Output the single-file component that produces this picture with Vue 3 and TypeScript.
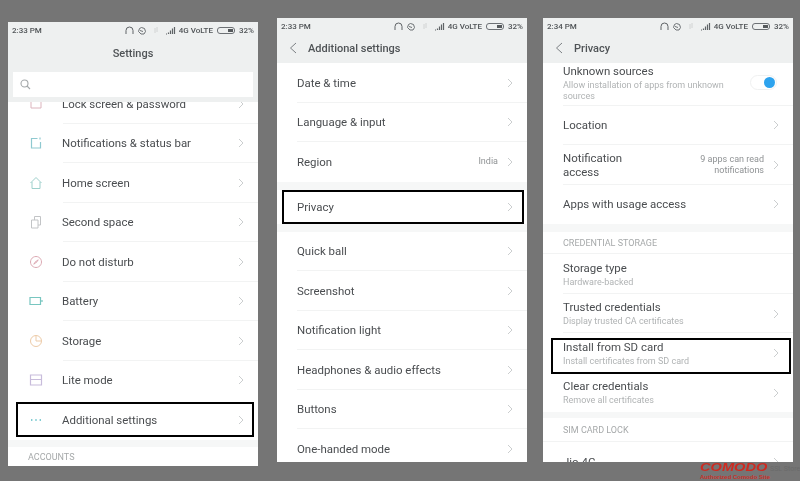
<template>
  <div class="page">
    <div v-for="p in phones" :key="p.id" :class="['phone', p.id]">
      <div class="head">
        <div class="status">
          <span class="time">{{ p.time }}</span>
          <svg class="st-icons" width="52" height="9" viewBox="0 0 52 9" fill="none" stroke="#5f6366">
            <path d="M1 8V4.5a3.5 3.5 0 0 1 7 0V8" stroke-width="1" />
            <path d="M16.5 1.5l3 1 1 3-1.5 2.5h-3L13.5 5.5l1-3z M15 4.5l3 1" stroke-width="0.9" />
            <path d="M30 2v5M32 1v5" stroke="#c9cccc" stroke-width="0.8" />
            <path d="M41 8h1M43.5 8V6.5M45.5 8V4.5M47.5 8V2.5M49.5 8V1" stroke-width="1.2" />
          </svg>
          <span class="net">4G VoLTE</span>
          <span class="batt"><i></i></span>
          <span class="pct">32%</span>
        </div>
        <div v-if="p.id === 'one'" class="title center">Settings</div>
        <div v-else class="title">
          <svg width="8" height="12" viewBox="0 0 8 12" fill="none" stroke="#7c8084" stroke-width="1"><path d="M7 1L1.5 6 7 11" /></svg>
          <span>{{ p.title }}</span>
        </div>
        <div v-if="p.id === 'one'" class="search">
          <svg width="11" height="11" viewBox="0 0 11 11" fill="none" stroke="#a4a8aa" stroke-width="1.1"><circle cx="4.5" cy="4.5" r="3.5" /><path d="M7 7l3 3" /></svg>
        </div>
      </div>
      <div class="list">
        <template v-for="(r, i) in p.rows" :key="i">
          <div v-if="r.gap" class="gap" :style="{ height: r.gap + 'px' }"></div>
          <div v-else-if="r.section" :class="['section', { tall: r.tall }]">{{ r.section }}</div>
          <div v-else :class="['row', r.cls, { boxed: r.boxed, ruled: r.ruled, 'has-sub': r.sub }]">
            <svg v-if="r.icon" class="ico" width="14" height="14" viewBox="0 0 14 14" fill="none" :stroke="icons[r.icon].color" :stroke-width="icons[r.icon].width || 1">
              <path :d="icons[r.icon].d" />
            </svg>
            <div class="text">
              <div class="label">{{ r.label }}</div>
              <div v-if="r.sub" class="sub">{{ r.sub }}</div>
            </div>
            <div v-if="r.value" class="value">{{ r.value }}</div>
            <span v-if="r.toggle" class="toggle"><i></i></span>
            <svg v-else-if="!r.noArrow" class="arrow" width="6" height="10" viewBox="0 0 6 10" fill="none" stroke="#cbcecf" stroke-width="1"><path d="M1 1l4 4-4 4" /></svg>
          </div>
        </template>
      </div>
    </div>
    <div class="badge">
      <div class="badge-top"><span class="comodo">COMODO</span><span class="ssl">SSL Store</span></div>
      <div class="auth">Authorized Comodo Site</div>
    </div>
  </div>
</template>

<script setup lang="ts">
interface Row {
  label?: string
  sub?: string
  value?: string
  icon?: string
  cls?: string
  boxed?: boolean
  ruled?: boolean
  toggle?: boolean
  noArrow?: boolean
  gap?: number
  section?: string
  tall?: boolean
}

interface Phone {
  id: string
  time: string
  title: string
  rows: Row[]
}

const icons: Record<string, { d: string; color: string; width?: number }> = {
  lock: { d: 'M2 4h10v7H2z', color: '#dcb4bd' },
  notif: { d: 'M8.5 2.5h-6V12h9V6M11 1.5v2', color: '#8fc9d0', width: 1.2 },
  home: { d: 'M1.5 7L7 1.5 12.5 7M3 6v6.5h8V6', color: '#9ed0cc' },
  second: { d: 'M2.5 5H9v8H2.5zM5.5 5V1.5h6V10H9', color: '#c2c4c6' },
  dnd: { d: 'M7 1.5a5.5 5.5 0 1 0 .01 0M9.2 4.8L6 7.2 4.8 9.2 8 6.8z', color: '#dca9b3' },
  battery: { d: 'M1 3.5h10.5v7H1zM13 6v2', color: '#78c6c0', width: 1.2 },
  storage: { d: 'M7 1.5a5.5 5.5 0 1 0 5.5 5.5A5.5 5.5 0 0 0 7 1.5V7h5.5', color: '#edcba8' },
  lite: { d: 'M1.5 2h11v4.5h-11zM1.5 6.5h11V12h-11z', color: '#c8bcdb', width: 1.2 },
  more: { d: 'M2 7h1.4M6.3 7h1.4M10.6 7H12', color: '#58bcc4', width: 1.4 },
}

const phones: Phone[] = [
  {
    id: 'one',
    time: '2:33 PM',
    title: 'Settings',
    rows: [
      { label: 'Lock screen & password', icon: 'lock', cls: 'clipped', ruled: true },
      { label: 'Notifications & status bar', icon: 'notif', ruled: true },
      { label: 'Home screen', icon: 'home', ruled: true },
      { label: 'Second space', icon: 'second', ruled: true },
      { label: 'Do not disturb', icon: 'dnd', ruled: true },
      { label: 'Battery', icon: 'battery', ruled: true },
      { label: 'Storage', icon: 'storage', ruled: true },
      { label: 'Lite mode', icon: 'lite' },
      { label: 'Additional settings', icon: 'more', boxed: true },
      { gap: 7 },
      { section: 'ACCOUNTS' },
    ],
  },
  {
    id: 'two',
    time: '2:33 PM',
    title: 'Additional settings',
    rows: [
      { label: 'Date & time', ruled: true },
      { label: 'Language & input', ruled: true },
      { label: 'Region', value: 'India' },
      { gap: 8 },
      { label: 'Privacy', cls: 'short', boxed: true },
      { gap: 7.5 },
      { label: 'Quick ball', ruled: true },
      { label: 'Screenshot', ruled: true },
      { label: 'Notification light', ruled: true },
      { label: 'Headphones & audio effects', ruled: true },
      { label: 'Buttons', ruled: true },
      { label: 'One-handed mode' },
    ],
  },
  {
    id: 'three',
    time: '2:34 PM',
    title: 'Privacy',
    rows: [
      { label: 'Unknown sources', sub: 'Allow installation of apps from unknown sources', toggle: true, cls: 'top', ruled: true },
      { label: 'Location', ruled: true },
      { label: 'Notification\naccess', value: '9 apps can read\nnotifications', ruled: true },
      { label: 'Apps with usage access' },
      { gap: 8 },
      { section: 'CREDENTIAL STORAGE' },
      { label: 'Storage type', sub: 'Hardware-backed', noArrow: true, ruled: true },
      { label: 'Trusted credentials', sub: 'Display trusted CA certificates', ruled: true },
      { label: 'Install from SD card', sub: 'Install certificates from SD card', boxed: true },
      { label: 'Clear credentials', sub: 'Remove all certificates' },
      { gap: 6 },
      { section: 'SIM CARD LOCK', tall: true },
      { label: 'Jio 4G' },
    ],
  },
]
</script>

<style scoped>
.page {
  position: relative;
  display: flex;
  align-items: flex-start;
  box-sizing: border-box;
  width: 800px;
  height: 481px;
  padding: 18px 0 0 8px;
  background: #757575;
  font-family: Roboto, "Liberation Sans", sans-serif;
  overflow: hidden;
}

.phone {
  display: flex;
  flex-direction: column;
  flex: none;
  width: 250px;
  height: 444px;
  background: #fff;
  overflow: hidden;
  color: #4a4d50;
  filter: blur(0.35px);
}

.phone.one {
  margin-top: 4px;
  margin-right: 19px;
}

.phone.two {
  margin-right: 16px;
}

.head {
  position: relative;
  z-index: 1;
  flex: none;
  background: #eef0f0;
}

.phone.one .head {
  height: 80px;
}

.phone.two .head,
.phone.three .head {
  height: 45px;
}

.status {
  display: flex;
  align-items: center;
  height: 16px;
  padding: 0 4px;
  font-size: 8px;
  font-weight: 500;
  color: #4f5356;
}

.time {
  flex: 1;
}

.st-icons {
  margin-right: 2px;
}

.net {
  margin-right: 4px;
}

.batt {
  display: flex;
  justify-content: flex-end;
  box-sizing: border-box;
  width: 18px;
  height: 7px;
  margin-right: 4px;
  padding: 1px;
  border: 1px solid #6d7175;
  border-radius: 3px;
}

.batt i {
  display: block;
  width: 5px;
  background: #55595c;
}

.title {
  display: flex;
  align-items: center;
  gap: 11px;
  height: 22px;
  margin-top: 3px;
  padding-left: 12px;
  font-size: 11px;
  font-weight: 500;
  color: #4f5356;
}

.title.center {
  justify-content: center;
  margin-top: 4px;
  padding-left: 0;
}

.search {
  display: flex;
  align-items: center;
  box-sizing: border-box;
  height: 25px;
  margin: 8px 5px 0;
  padding-left: 7px;
  background: #fff;
}

.list {
  flex: 1;
  overflow: hidden;
}

.row {
  position: relative;
  display: flex;
  align-items: center;
  box-sizing: border-box;
  height: 39.5px;
  padding-right: 14px;
  padding-left: 20px;
}

.row.has-sub {
  padding-top: 1px;
}

.phone.one .row {
  padding-left: 0;
}

.ico {
  flex: none;
  margin: 0 19px 0 21px;
}

.ruled::before {
  content: "";
  position: absolute;
  right: 0;
  bottom: 0;
  left: 20px;
  height: 1px;
  background: #f2f3f3;
}

.phone.one .ruled::before {
  left: 55px;
}

.boxed::after {
  content: "";
  position: absolute;
  top: 2px;
  right: 4px;
  bottom: 3px;
  left: 8px;
  border: 2px solid #000;
}

.phone.two .boxed::after {
  top: 0;
  right: 3px;
  bottom: 0;
  left: 5px;
}

.phone.three .boxed::after {
  top: 5px;
  right: 2px;
  bottom: -1px;
  left: 8px;
}

.row.clipped {
  margin-top: -18px;
}

.row.top {
  height: 42.5px;
  padding-top: 1px;
  align-items: flex-start;
}

.row.short {
  height: 34.5px;
}

.text {
  flex: 1;
  min-width: 0;
}

.label {
  font-size: 11.45px;
  line-height: 14px;
  white-space: pre-line;
  color: #4a4d50;
}

.sub {
  margin-top: 2px;
  font-size: 9px;
  line-height: 11px;
  color: #b0b3b4;
}

.row.top .sub {
  max-width: 170px;
}

.value {
  margin-right: 9px;
  font-size: 9px;
  line-height: 11px;
  text-align: right;
  white-space: pre-line;
  color: #8f9294;
}

.arrow {
  flex: none;
}

.toggle {
  position: relative;
  display: block;
  flex: none;
  box-sizing: border-box;
  width: 27px;
  height: 15px;
  margin: 11px 2px 0 0;
  border: 1px solid #f0f1f1;
  border-radius: 8px;
}

.toggle i {
  position: absolute;
  top: 1px;
  right: 1px;
  width: 11px;
  height: 11px;
  border-radius: 50%;
  background: #2da3ee;
}

.gap {
  background: #f6f7f7;
}

.section {
  display: flex;
  align-items: center;
  box-sizing: border-box;
  height: 22px;
  padding-left: 20px;
  font-size: 9px;
  color: #a6a9aa;
  border-bottom: 1px solid #f2f3f3;
}

.section.tall {
  height: 24px;
}

.badge {
  position: absolute;
  top: 463px;
  left: 700px;
  width: 100px;
  white-space: nowrap;
}

.badge-top {
  display: flex;
  align-items: baseline;
}

.comodo {
  flex: none;
  width: 70px;
  font-family: "Liberation Sans", sans-serif;
  font-size: 10px;
  line-height: 10px;
  font-weight: 700;
  font-style: italic;
  color: #cf2a20;
  transform: scaleX(1.46);
  transform-origin: left center;
}

.ssl {
  flex: none;
  font-size: 7px;
  color: #6a6a6a;
}

.auth {
  margin-top: 1px;
  font-family: "Liberation Sans", sans-serif;
  font-size: 6px;
  line-height: 7px;
  font-weight: 700;
  color: #c9302a;
}
</style>
